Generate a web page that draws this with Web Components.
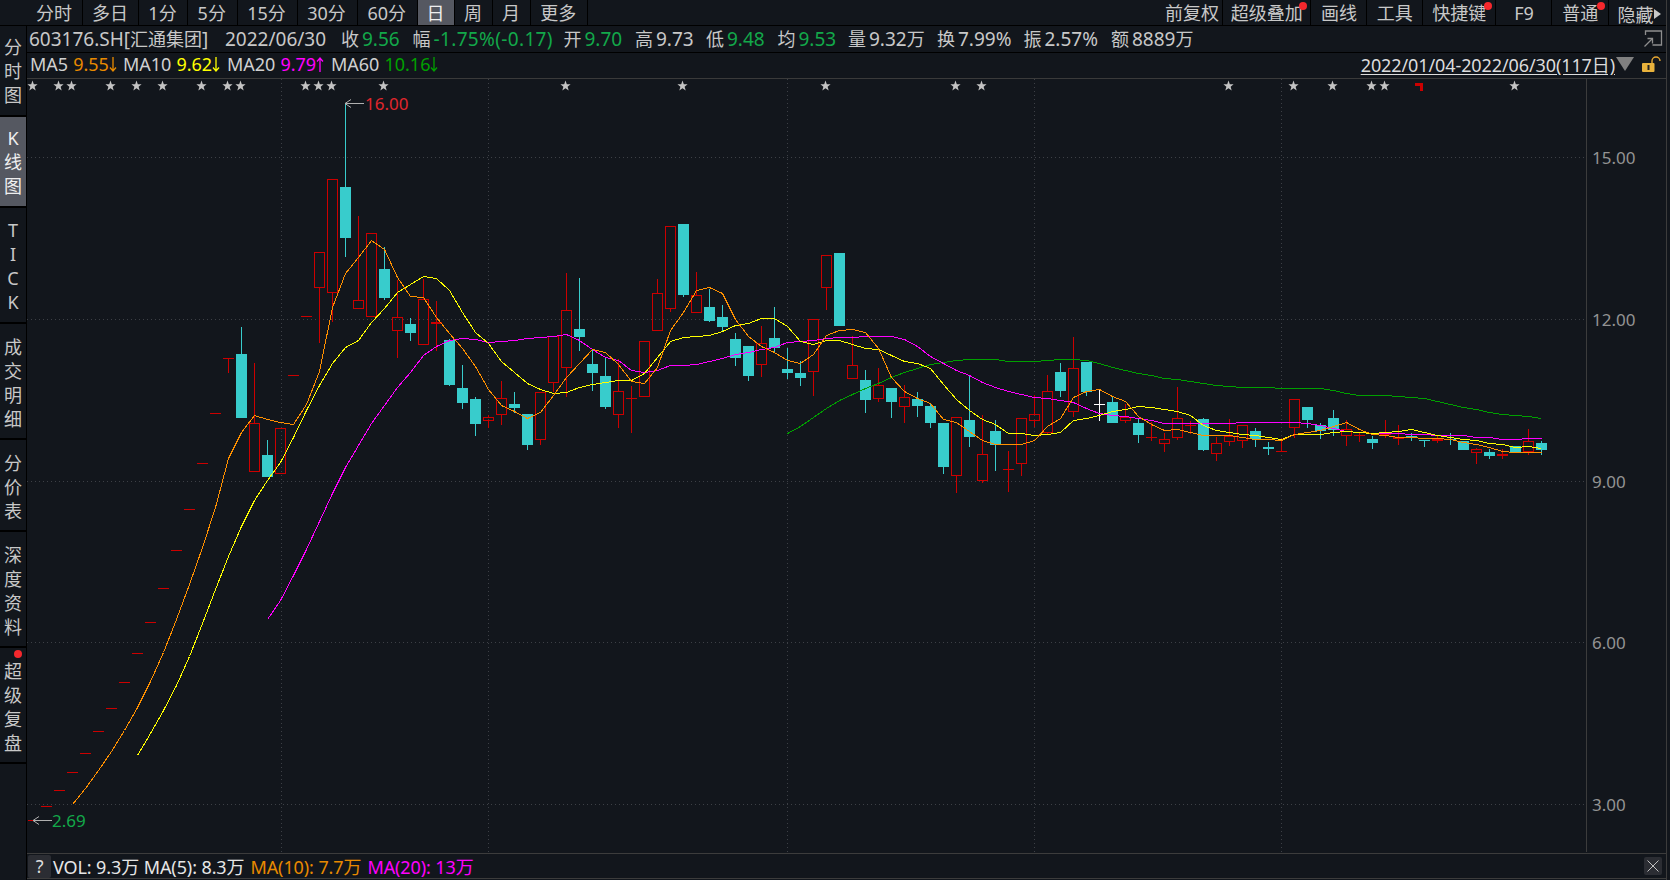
<!doctype html>
<html><head><meta charset="utf-8">
<style>
html,body{margin:0;padding:0;background:#12161c;width:1670px;height:880px;overflow:hidden}
body{font-family:"Noto Sans","Noto Sans CJK SC",sans-serif;font-size:18px;color:#c8c8c8}
kline-app{display:block}
</style></head><body>
<kline-app></kline-app>
<script>
class ToolBtn extends HTMLElement{
  constructor(){super();this.attachShadow({mode:'open'}).innerHTML=`<style>
  :host{display:flex;align-items:center;justify-content:center;height:25px;box-sizing:border-box;border-right:1px solid #000;position:relative;color:#c8c8c8;font-size:18px;line-height:25px;white-space:nowrap;padding:2px 1px 0 0}
  :host([active]){background:#555861;color:#eee}
  .dot{position:absolute;top:2px;right:3px;width:8px;height:8px;border-radius:50%;background:#f5282d;display:none}
  :host([dot]) .dot{display:block}
  </style><slot></slot><span class="dot"></span>`}
  connectedCallback(){this.style.width=this.getAttribute('w')+'px';if(this.hasAttribute('pad'))this.style.padding=this.getAttribute('pad')}
}
customElements.define('tool-btn',ToolBtn);

class TopBar extends HTMLElement{
  constructor(){super();const L=[['分时',56],['多日',56],['1分',49],['5分',49.5],['15分',60],['30分',60],['60分',60.5],['日',37,1],['周',38],['月',38],['更多',56.5]];
   const R=[['前复权',57,0,'2px 3px 0 0'],['超级叠加',88.5,1],['画线',56,0],['工具',55.5,0],['快捷键',73.5,1],['F9',56,0],['普通',56.5,1]];
   this.attachShadow({mode:'open'}).innerHTML=`<style>
   :host{display:flex;height:26px;box-sizing:border-box;border-bottom:1px solid #000;padding-left:27px;background:#12161c}
   .sp{flex:1}
   .hide{display:flex;align-items:center;width:57.5px;height:25px;padding:2px 0 0 9px;box-sizing:border-box;color:#c8c8c8;font-size:18px;white-space:nowrap;overflow:hidden}
   .hide i{display:block;flex:none;width:0;height:0;border-left:7px solid #c8c8c8;border-top:5px solid transparent;border-bottom:5px solid transparent}
   </style>`+L.map(a=>`<tool-btn w="${a[1]}" ${a[2]?'active':''}>${a[0]}</tool-btn>`).join('')+`<div class="sp"></div>`+
   R.map(a=>`<tool-btn w="${a[1]}" ${a[2]?'dot':''} pad="${a[3]||'2px 0 0 1px'}">${a[0]}</tool-btn>`).join('')+`<div class="hide">隐藏<i></i></div>`}
}
customElements.define('top-bar',TopBar);

class SideTabs extends HTMLElement{
  constructor(){super();
   const T=[['分时图',91,0,0,0],['K线图',91,1,0,1],['TICK',116,0,0,2],['成交明细',116,0,0,4],['分价表',92,0,0,4],['深度资料',116,0,0,4],['超级复盘',116,0,1,4]];
   this.attachShadow({mode:'open'}).innerHTML=`<style>
   :host{display:block;width:26px;flex:none;background:#12161c;height:854px}
   .t{box-sizing:border-box;border-bottom:2px solid #000;display:flex;flex-direction:column;align-items:center;justify-content:center;position:relative;font-size:18px;line-height:24px;color:#c8c8c8}
   .t.a{background:#555861;color:#eee}
   .t b{font-weight:400;display:block;height:24px}
   .d{position:absolute;top:2px;right:4px;width:8px;height:8px;border-radius:50%;background:#f5282d}
   </style>`+T.map(a=>`<div class="t ${a[2]?'a':''}" style="height:${a[1]}px;padding-top:${a[4]}px">${[...a[0]].map(c=>`<b>${c}</b>`).join('')}${a[3]?'<span class="d"></span>':''}</div>`).join('')}
}
customElements.define('side-tabs',SideTabs);

class InfoRow extends HTMLElement{
  constructor(){super();
   const G='#12a84a',W='#c8c8c8';
   const I=[[196,'603176.SH[<s>汇通集团</s>]'],[116,'2022/06/30'],[71.5,'收','9.56',G],[151,'幅','<span style="letter-spacing:.35px">-1.75%(-0.17)</span>',G],[71.5,'开','9.70',G],[71,'高','9.73',W],[71.5,'低','9.48',G],[70.5,'均','9.53',G],[89,'量','9.32<s>万</s>',W],[86.5,'换','7.99%',W],[87.5,'振','2.57%',W],[100,'额','8889<s>万</s>',W]];
   this.attachShadow({mode:'open'}).innerHTML=`<style>
   :host{display:flex;align-items:center;height:27px;box-sizing:border-box;border-bottom:1px solid #000;padding:0 0 1px 2px;position:relative;font-size:19px;white-space:nowrap;color:#c8c8c8}
   span.i{display:block;flex:none}
   s{text-decoration:none;font-size:18px}
   b{font-weight:400;font-size:18px}
   em{font-style:normal;margin-left:3px}
   svg{position:absolute;left:1617px;top:4px}
   </style>`+I.map(a=>`<span class="i" style="width:${a[0]}px">${a[2]?`<b>${a[1]}</b>`:a[1]}${a[2]?`<em style="color:${a[3]}">${a[2]}</em>`:''}</span>`).join('')+
   `<svg width="19" height="17" viewBox="0 0 19 17" fill="none" stroke="#8e8e8e" stroke-width="1.300"><path d="M1.500 5V1H17.500V15H8.500"/><path d="M.5 16.500L8 9"/><path d="M3.500 8.500H8.500V13.500"/></svg>`}
}
customElements.define('info-row',InfoRow);

const arrow=(up,col)=>`<svg class="arr" width="8" height="15" viewBox="0 0 8 15" fill="none" stroke="${col}" stroke-width="1.300">${up?'<path d="M4 15V1M1 4.500L4 1L7 4.500"/>':'<path d="M4 0V14M1 10.500L4 14L7 10.500"/>'}</svg>`;
class MaRow extends HTMLElement{
  constructor(){super();
   const M=[[93,'MA5','9.55',0,'#e88a00'],[104,'MA10','9.62',0,'#ffff00'],[104,'MA20','9.79',1,'#ff00ff'],[120,'MA60','10.16',0,'#00a000']];
   this.attachShadow({mode:'open'}).innerHTML=`<style>
   :host{display:flex;align-items:center;height:26px;box-sizing:border-box;border-bottom:1px solid #3a3a3a;padding:0 0 3px 3px;font-size:18px;white-space:nowrap;color:#d0d0d0}
   .m{display:flex;align-items:center;flex:none}
   em{font-style:normal;margin-left:5px;display:flex;align-items:center}
   .sp{flex:1}
   u{color:#dcdcdc;text-underline-offset:2px;letter-spacing:-.1px}
   .tri{width:0;height:0;border-top:14px solid #808080;border-left:9px solid transparent;border-right:9px solid transparent;margin:0 8px 0 1px}
   .lock{margin-right:5px;flex:none}
   .arr{flex:none}
   </style>`+M.map(a=>`<span class="m" style="width:${a[0]}px">${a[1]}<em style="color:${a[4]}">${a[2]}${arrow(a[3],a[4])}</em></span>`).join('')+
   `<span class="sp"></span><u>2022/01/04-2022/06/30(117日)</u><span class="tri"></span><svg class="lock" width="19" height="16" viewBox="0 0 19 16"><path d="M10 7V5a4 4 0 0 1 8 0" fill="none" stroke="#e8a832" stroke-width="1.400"/><rect x="0" y="7" width="12.500" height="9" rx="1" fill="#e8b23c"/><rect x="5.500" y="9" width="2" height="5" fill="#222"/></svg>`}
}
customElements.define('ma-row',MaRow);

// r = hollow red, t = filled teal, w = white doji: [type, top, bottom, high, low]
const C=[
['r',820,820],['r',806,806],['r',790,790],['r',772,772],['r',753,753],['r',731,731],['r',708,708],['r',682,682],['r',653,653],['r',622,622],['r',588,588],['r',550,550],['r',509,509],['r',463,463],['r',413,413],
['r',358,358,358,373],['t',354,418,327,418],['r',423,472,363,472],['t',455,477,440,477],['r',428,474],['r',375,375],['r',316,316],['r',252,288,252,343],['r',179,293,179,322],['t',187,238,103,257],
['r',300,309,216,309],['r',233,317],['t',269,298,247,300],['r',317,331,280,358],['t',324,333,318,341],['r',299,345,279,345],['r',322,324,301,351],['t',340,385,339,386],['t',388,403,365,409],['t',399,424,397,436],
['r',417,421,415,428],['r',398,415,381,425],['t',404,408,392,413],['t',414,445,414,450],['r',392,440,392,445],['r',336,383,336,392],['r',310,368,273,397],['t',329,337,278,351],['t',364,373,349,391],['t',376,407,357,409],
['r',391,415,359,428],['r',398,398,386,433],['r',341,397],['r',293,331,279,331],['r',226,309,226,312],['t',224,295,224,297],['r',295,313,272,313],['t',307,321,289,322],['t',317,327,305,332],['t',339,358,333,366],
['t',346,376,346,381],['r',343,365,326,377],['t',338,348,307,353],['t',369,373,348,379],['t',373,378,361,386],['r',319,372,319,396],['r',255,288,255,310],['t',253,326],['r',365,379,336,379],['t',380,400,370,413],
['r',385,399,368,402],['t',388,402,388,418],['r',397,407,385,423],['t',399,406,392,417],['t',406,423,403,428],['t',423,467,423,474],['r',417,476,417,493],['t',420,437,376,447],['r',454,481,415,483],['t',431,445,420,471],
['r',469,469,451,492],['r',418,464,418,476],['r',414,421,395,427],['r',391,433,375,435],['t',372,391,363,397],['r',368,412,337,417],['t',362,392,362,396],['w',404,404,389,421],['t',402,423,397,423],['r',417,421,404,423],
['t',423,435,419,443],['r',437,437,422,441],['r',439,444,433,452],['r',418,438,387,440],['r',425,425,421,434],['t',419,450,418,451],['r',443,454,437,461],['r',436,442,419,446],['r',425,441,425,448],['t',431,439,428,447],
['t',447,449,442,455],['r',451,451,438,451],['r',399,428,399,438],['t',407,420,407,428],['t',425,431,423,439],['t',418,430,410,436],['r',429,436,420,446],['r',435,435,432,442],['t',439,443,436,449],['r',433,435,420,438],
['r',437,439,425,445],['t',436,437,433,441],['t',440,440,440,447],['r',439,441,436,443],['t',439,439,433,445],['t',441,450],['r',449,453,448,464],['t',452,456,449,459],['r',454,456,449,459],['t',446,452,446,453],['r',441,452,429,455],['t',443,450,441,455]
];
const M5=[804,788,770,751,730,707,681,652,619,584,547,507,458,432,415,419,422,424,404,371,307,273,257,240,249,277,296,297,317,333,348,366,389,405,411,418,412,395,377,363,349,352,364,381,383,367,330,312,290,287,293,319,336,346,352,360,363,354,335,330,329,332,348,377,391,398,403,419,422,431,440,444,444,444,440,426,418,397,391,389,396,401,416,424,430,429,432,435,435,435,437,439,439,440,434,432,430,426,422,429,434,435,437,437,438,438,439,442,444,447,451,452,452,452];
const M10=[755,733,710,685,656,623,589,556,526,500,480,462,437,410,385,363,347,340,322,308,292,284,276,278,290,312,332,343,361,372,383,389,393,392,387,384,382,380,380,373,357,341,337,336,335,331,325,323,318,318,326,341,344,340,340,344,348,349,355,361,363,368,384,399,410,419,424,433,433,435,434,432,420,418,415,411,409,406,407,409,411,415,425,430,432,434,435,437,439,434,434,434,432,431,432,433,432,431,429,432,435,437,439,440,443,444,447,446,448];
const M20=[619,600,575,549,521,493,467,445,423,405,387,372,355,346,340,338,339,342,341,340,338,337,336,334,340,349,357,360,370,372,370,365,365,364,361,358,354,352,349,347,342,341,340,338,337,337,336,336,336,339,346,356,363,370,375,382,387,391,394,397,398,400,402,408,413,415,416,418,420,423,423,423,423,423,423,422,422,422,422,422,423,425,428,431,432,433,433,433,434,434,435,435,435,437,437,439,439,438,438];
const M60=[433,426,417,408,400,394,388,383,377,372,368,364,362,360,359,359,359,361,361,361,360,359,359,360,363,367,370,373,375,378,379,381,383,385,386,387,387,387,388,388,388,388,390,393,395,395,395,396,397,398,401,404,407,409,412,414,415,416,418];
const cx=i=>33+13*i;
const STARS=[0,2,3,6,8,10,13,15,16,21,22,23,27,41,50,61,71,73,92,97,100,103,104,114];
class KChart extends HTMLElement{
  constructor(){super();
   let s='';
   const W=1639,H=774,ox=27,oy=79;
   const X=x=>x-ox,Y=y=>y-oy;
   for(const y of [157,319,481,642,804]) s+=`<line x1="0" x2="${X(1586)}" y1="${Y(y)+.5}" y2="${Y(y)+.5}" class="g"/>`;
   for(const x of [281,488,787,1034,1281]) s+=`<line y1="0" y2="${Y(852)}" x1="${X(x)+.5}" x2="${X(x)+.5}" class="g"/>`;
   s+=`<line x1="${X(1586)+.5}" x2="${X(1586)+.5}" y1="0" y2="${Y(852)}" stroke="#3c3c3c"/>`;
   C.forEach((c,i)=>{
     const [t,a,b,h=a,l=b]=c,x=X(cx(i)),ya=Y(a),yb=Y(b),yh=Y(h),yl=Y(l);
     const col=t=='r'?'#cc0000':t=='t'?'#38cccc':'#ffffff';
     if(yh<ya)s+=`<rect x="${x}" y="${yh}" width="1" height="${ya-yh}" fill="${col}"/>`;
     if(yl>yb)s+=`<rect x="${x}" y="${yb}" width="1" height="${yl-yb}" fill="${col}"/>`;
     if(a==b)s+=`<rect x="${x-5}" y="${ya}" width="11" height="1" fill="${col}"/>`;
     else if(t=='r')s+=`<rect x="${x-4.5}" y="${ya+.5}" width="10" height="${yb-ya-1}" fill="none" stroke="${col}"/>`;
     else s+=`<rect x="${x-5}" y="${ya}" width="11" height="${yb-ya}" fill="${col}"/>`;
   });
   const pl=(a,st,col)=>`<polyline fill="none" stroke="${col}" points="${a.map((y,k)=>(X(cx(st+k))+.5)+','+(Y(y)+.5)).join(' ')}"/>`;
   s+=pl(M60,58,'#00a000')+pl(M20,18,'#ff00ff')+pl(M10,8,'#ffff00')+pl(M5,3,'#ff9000');
   for(const i of STARS){const x=X(cx(i))-.5,y=7;
     const P=[];for(let k=0;k<10;k++){const r=k%2?2.2:5.4,an=-Math.PI/2+k*Math.PI/5;P.push((x+r*Math.cos(an)).toFixed(1)+','+(y+r*Math.sin(an)).toFixed(1));}
     s+=`<polygon class="st" points="${P.join(' ')}" fill="#c4c4c4"/>`;}
   s+=`<path d="M${X(1415)} ${Y(83)}h8v8h-3v-5h-5z" fill="#cc0000"/>`;
   s+=`<path class="ar" d="M${X(345)} 24.500H${X(364)}M${X(345)+6} 20.500L${X(345)} 24.500L${X(345)+6} 28.500" fill="none" stroke="#b0b0b0"/>`;
   s+=`<path class="ar" d="M${X(33)} ${Y(820)+.5}H${X(52)}M${X(33)+6} ${Y(820)-3.5}L${X(33)} ${Y(820)+.5}L${X(33)+6} ${Y(820)+4.5}" fill="none" stroke="#b0b0b0"/>`;
   const labels=[['15.00',157],['12.00',319],['9.00',481],['6.00',642],['3.00',804]].map(a=>`<span class="ax" style="top:${Y(a[1])-12}px">${a[0]}</span>`).join('');
   this.attachShadow({mode:'open'}).innerHTML=`<style>
   :host{display:block;position:relative;width:${W}px;height:${H}px;background:#12161c;overflow:hidden;font-size:17px}
   svg{position:absolute;inset:0;shape-rendering:crispEdges}
   .g{stroke:#3d4046;stroke-dasharray:1 3}
   .st,.ar{shape-rendering:auto}
   .ax{position:absolute;left:${X(1592)}px;color:#939393;line-height:26px}
   .hl{position:absolute;line-height:26px}
   </style><svg width="${W}" height="${H}">${s}</svg>${labels}
   <span class="hl" style="left:${X(365)}px;top:${24-12}px;color:#e0262c">16.00</span>
   <span class="hl" style="left:${X(52)}px;top:${Y(820)-12}px;color:#12a84a">2.69</span>`}
}
customElements.define('k-chart',KChart);

class VolBar extends HTMLElement{
  constructor(){super();this.attachShadow({mode:'open'}).innerHTML=`<style>
   :host{display:flex;align-items:center;height:26px;box-sizing:border-box;border-top:1px solid #3c3c3c;border-bottom:1px solid #3c3c3c;padding-left:1px;font-size:18px;white-space:nowrap;color:#e6e6e6;letter-spacing:-.1px}
   .q{width:23px;height:23px;background:#2b2d33;border-radius:2px;display:flex;align-items:center;justify-content:center;margin-right:2px;color:#ddd}
   .o{color:#e88a00;margin-left:6px}.m{color:#ff00ff;margin-left:6px}
   .sp{flex:1}
   .x{width:18px;height:18px;background:#2b2d33;border-radius:2px;margin-right:4px;flex:none;display:flex;align-items:center;justify-content:center}
   </style><span class="q">?</span><span>VOL: 9.3万 MA(5): 8.3万</span><span class="o">MA(10): 7.7万</span><span class="m">MA(20): 13万</span><span class="sp"></span><span class="x"><svg width="12" height="12" viewBox="0 0 12 12" fill="none" stroke="#c0c0c0" stroke-width="1"><path d="M.5 .5L11.500 11.500M11.500 .5L.5 11.500"/></svg></span>`}
}
customElements.define('vol-bar',VolBar);

class KlineApp extends HTMLElement{
  constructor(){super();this.attachShadow({mode:'open'}).innerHTML=`<style>
   :host{display:block;width:1670px;height:880px;position:relative;background:#12161c;overflow:hidden}
   .wrap{display:flex;height:100%;padding-right:3px;box-sizing:border-box}
   .bar{width:1px;background:#000;flex:none;margin-top:25px}
   .main{flex:1;min-width:0;display:flex;flex-direction:column;border-right:1px solid #3c3c3c}
   top-bar{margin-left:-27px}
   </style><div class="wrap"><side-tabs style="margin-top:26px"></side-tabs><div class="bar"></div><div class="main"><top-bar></top-bar><info-row></info-row><ma-row></ma-row><k-chart></k-chart><vol-bar></vol-bar></div></div>`}
}
customElements.define('kline-app',KlineApp);
</script>
</body></html>
